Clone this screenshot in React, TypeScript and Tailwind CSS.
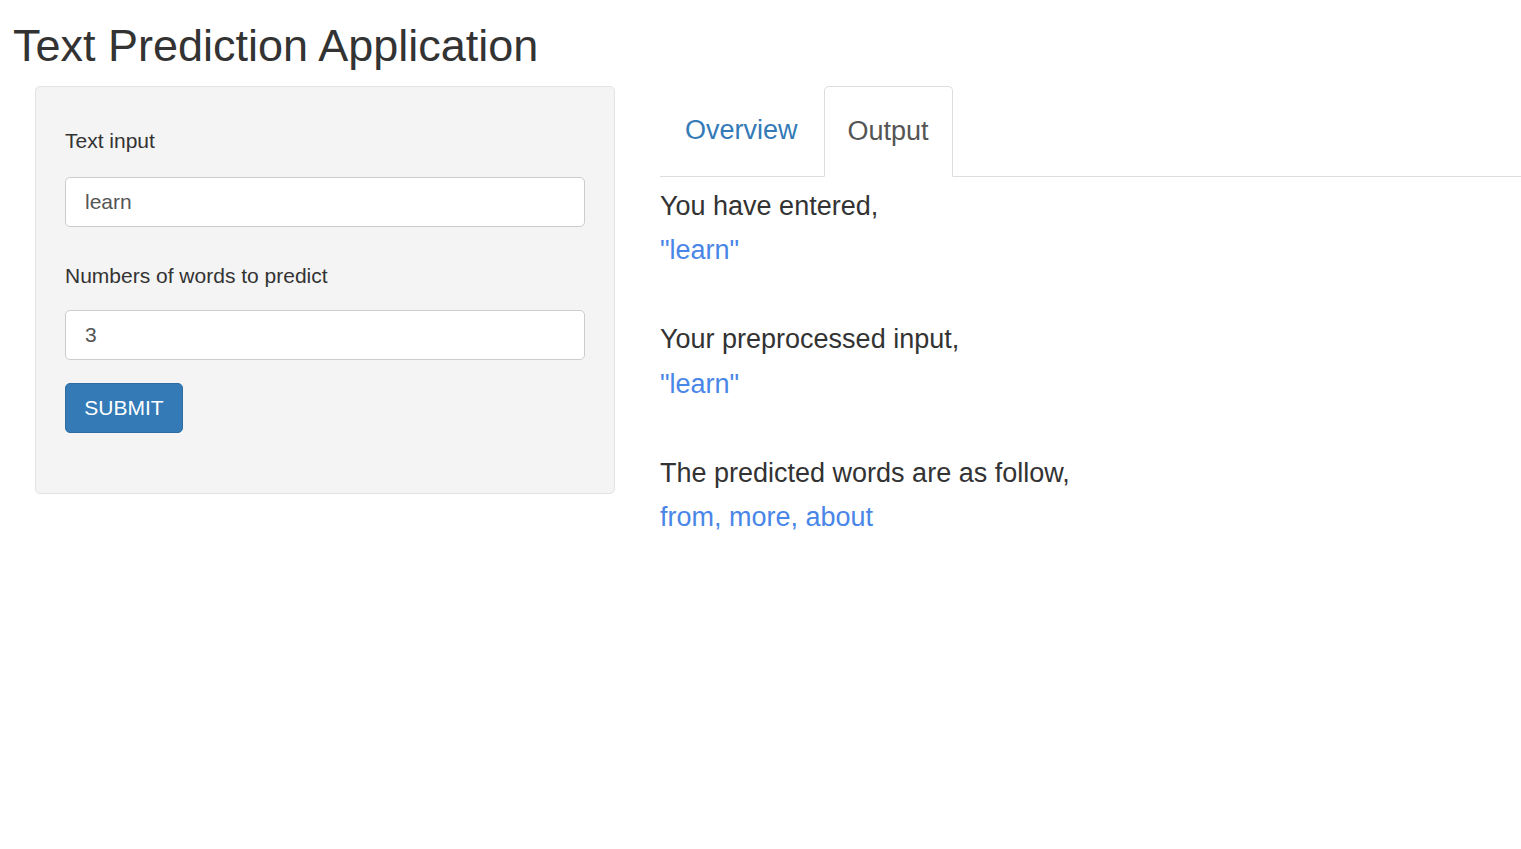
import React from 'react';

const lines = [
  { label: 'You have entered,', value: '"learn"' },
  { label: 'Your preprocessed input,', value: '"learn"' },
  { label: 'The predicted words are as follow,', value: 'from, more, about' },
];

const App: React.FC = () => {
  return (
    <div className="min-h-screen bg-white text-[#333] font-['Liberation_Sans',Arial,sans-serif]">
      <h1 className="pl-[13px] pt-[21px] text-[45px] leading-[1.1] font-normal">Text Prediction Application</h1>

      <div className="flex mt-[15px]">
        {/* sidebar */}
        <div className="ml-[35px] w-[580px] shrink-0">
          <div className="bg-[#f4f4f4] border border-[#e3e3e3] rounded-[5px] px-[29px] pt-[39px] pb-[60px]">
            <label className="block text-[21px] leading-[30px]">Text input</label>
            <input
              type="text"
              defaultValue="learn"
              className="mt-[21px] block w-full h-[50px] bg-white border border-[#ccc] rounded-[5px] px-[19px] text-[21px] text-[#555] outline-none"
            />
            <label className="block mt-[34px] text-[21px] leading-[30px]">Numbers of words to predict</label>
            <input
              type="text"
              defaultValue="3"
              className="mt-[19px] block w-full h-[50px] bg-white border border-[#ccc] rounded-[5px] px-[19px] text-[21px] text-[#555] outline-none"
            />
            <button className="mt-[23px] h-[50px] w-[118px] bg-[#337ab7] border border-[#2e6da4] rounded-[5px] text-white text-[21px]">
              SUBMIT
            </button>
          </div>
        </div>

        {/* main */}
        <div className="ml-[45px] flex-1">
          <ul className="flex border-b border-[#ddd] h-[91px]">
            <li className="mr-[1px]">
              <a className="flex items-center h-[90px] px-[24px] text-[27px] text-[#337ab7] border border-transparent">Overview</a>
            </li>
            <li>
              <a className="flex items-center h-[91px] px-[23px] text-[27px] text-[#555] bg-white border border-[#ddd] border-b-white rounded-t-[5px]">
                Output
              </a>
            </li>
          </ul>
          <div className="pt-[7px] text-[27px] leading-[44.5px]">
            {lines.map((l) => (
              <div key={l.label} className="mb-[44.5px]">
                <div>{l.label}</div>
                <div className="text-[#4a86e8]">{l.value}</div>
              </div>
            ))}
          </div>
        </div>
      </div>
    </div>
  );
};

export default App;
